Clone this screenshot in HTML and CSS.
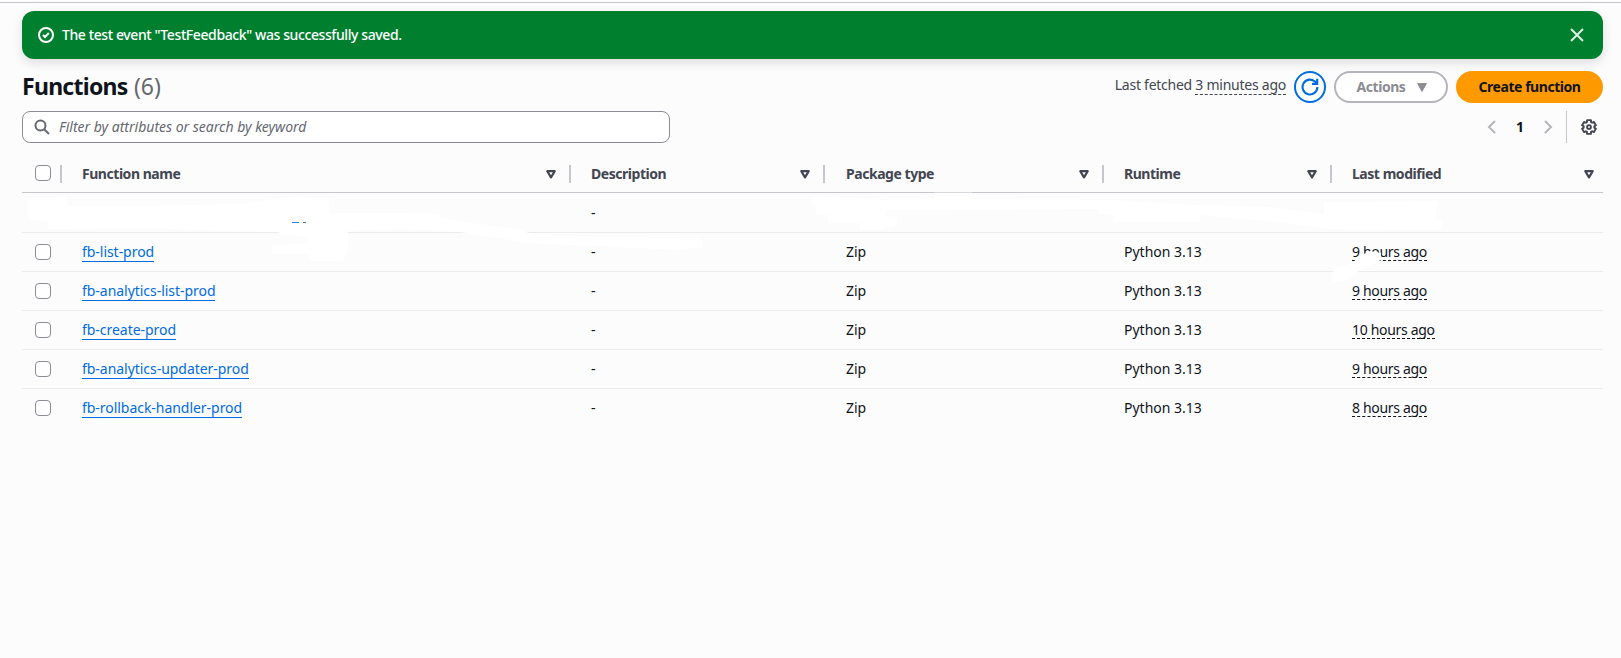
FILE: index.html
```html
<!DOCTYPE html>
<html lang="en">
<head>
<meta charset="utf-8">
<title>Functions</title>
<link rel="stylesheet" href="styles.css">
</head>
<body>
<main class="page">
  <div class="flash">
    <svg class="flash-icon" width="16" height="16" viewBox="0 0 16 16" fill="none" stroke="#fff" stroke-width="2"><circle cx="8" cy="8" r="7"/><path d="M5 8l2 2 3.8-4"/></svg>
    <span class="flash-text">The test event "TestFeedback" was successfully saved.</span>
    <svg class="flash-close" width="16" height="16" viewBox="0 0 16 16" fill="none" stroke="#dfeee3" stroke-width="2"><path d="M2 2l12 12M14 2L2 14"/></svg>
  </div>

  <header class="header">
    <h1 class="title">Functions <span class="count">(6)</span></h1>
    <div class="actions">
      <span class="fetched">Last fetched <span class="fetched-time">3 minutes ago</span></span>
      <button class="btn btn-refresh" aria-label="Refresh"><svg width="18" height="18" viewBox="0 0 16 16" fill="none" stroke="#006ce0" stroke-width="1.9"><path d="M14.6 8A6.6 6.6 0 1 1 12.7 3.4L14.4 5"/><path d="M14.4 .6v4.6H9.8"/></svg></button>
      <button class="btn btn-disabled">Actions <svg width="10" height="9" viewBox="0 0 10 9"><path d="M.6.6h8.8L5 8.4z" fill="#8c8c94" stroke="#8c8c94" stroke-linejoin="round"/></svg></button>
      <button class="btn btn-primary">Create function</button>
    </div>
  </header>

  <div class="tools">
    <div class="search">
      <svg width="16" height="16" viewBox="0 0 16 16" fill="none" stroke="#656871" stroke-width="2"><circle cx="6.5" cy="6.5" r="5"/><path d="M10.2 10.2L15 15"/></svg>
      <span class="placeholder">Filter by attributes or search by keyword</span>
    </div>
    <div class="pager">
      <svg width="16" height="16" viewBox="0 0 16 16" fill="none" stroke="#b4b4bb" stroke-width="2"><path d="M11 2L5 8l6 6"/></svg>
      <span class="page-number">1</span>
      <svg width="16" height="16" viewBox="0 0 16 16" fill="none" stroke="#b4b4bb" stroke-width="2"><path d="M5 2l6 6-6 6"/></svg>
      <span class="settings"><svg width="16" height="16" viewBox="0 0 16 16" fill="none" stroke="#424650" stroke-width="1.9" stroke-linejoin="round"><path d="M6.07 1.1H9.93L10.1 3.1L11.1 3.75L12.9 2.9L14.9 6.3L13.3 7.4V8.6L14.9 9.7L12.9 13.1L11.1 12.25L10.1 12.9L9.93 14.9H6.07L5.9 12.9L4.9 12.25L3.1 13.1L1.1 9.7L2.7 8.6V7.4L1.1 6.3L3.1 2.9L4.9 3.75L5.9 3.1Z"/><circle cx="8" cy="8" r="1.9"/></svg></span>
    </div>
  </div>

  <section class="table">
    <div class="row row-head">
      <div class="cell check"><span class="box"></span></div>
      <div class="cell">Function name<svg class="sort" width="10" height="9" viewBox="0 0 10 9"><path d="M1.3 1.2h7.4L5 7.4z"/></svg></div>
      <div class="cell">Description<svg class="sort" width="10" height="9" viewBox="0 0 10 9"><path d="M1.3 1.2h7.4L5 7.4z"/></svg></div>
      <div class="cell">Package type<svg class="sort" width="10" height="9" viewBox="0 0 10 9"><path d="M1.3 1.2h7.4L5 7.4z"/></svg></div>
      <div class="cell">Runtime<svg class="sort" width="10" height="9" viewBox="0 0 10 9"><path d="M1.3 1.2h7.4L5 7.4z"/></svg></div>
      <div class="cell">Last modified<svg class="sort" width="10" height="9" viewBox="0 0 10 9"><path d="M1.3 1.2h7.4L5 7.4z"/></svg></div>
    </div>
    <div class="row row-blank">
      <div class="cell"></div><div class="cell"></div><div class="cell">-</div><div class="cell"></div><div class="cell"></div><div class="cell"></div>
    </div>
    <div class="row">
      <div class="cell check"><span class="box"></span></div><div class="cell"><a class="link">fb-list-prod</a></div><div class="cell">-</div><div class="cell">Zip</div><div class="cell">Python 3.13</div><div class="cell"><span class="ago">9 hours ago</span></div>
    </div>
    <div class="row">
      <div class="cell check"><span class="box"></span></div><div class="cell"><a class="link">fb-analytics-list-prod</a></div><div class="cell">-</div><div class="cell">Zip</div><div class="cell">Python 3.13</div><div class="cell"><span class="ago">9 hours ago</span></div>
    </div>
    <div class="row">
      <div class="cell check"><span class="box"></span></div><div class="cell"><a class="link">fb-create-prod</a></div><div class="cell">-</div><div class="cell">Zip</div><div class="cell">Python 3.13</div><div class="cell"><span class="ago">10 hours ago</span></div>
    </div>
    <div class="row">
      <div class="cell check"><span class="box"></span></div><div class="cell"><a class="link">fb-analytics-updater-prod</a></div><div class="cell">-</div><div class="cell">Zip</div><div class="cell">Python 3.13</div><div class="cell"><span class="ago">9 hours ago</span></div>
    </div>
    <div class="row">
      <div class="cell check"><span class="box"></span></div><div class="cell"><a class="link">fb-rollback-handler-prod</a></div><div class="cell">-</div><div class="cell">Zip</div><div class="cell">Python 3.13</div><div class="cell"><span class="ago">8 hours ago</span></div>
    </div>
  </section>
</main>

<!-- white brush strokes over the first rows -->
<svg class="strokes" width="1621" height="658" viewBox="0 0 1621 658" fill="#fff">
  <path d="M29 199L67 197V206L150 206L240 204L290 197L329 198V213L400 213L440 214V218L520 230L535 235L600 237L702 238V247L680 250L530 243L460 232L400 229L348 231V252L343 261H310V254H272V246L308 243V236L284 235L278 232L222 231L150 228L48 229V221L29 220Z"/>
  <path d="M812 196L880 200L934 199V193H972V199L1110 200L1190 205L1270 207L1324 214V202L1437 201L1435 220L1442 221V230L1400 230L1330 229L1280 222L1200 215V222H1114V215L1098 214V209L886 210V216L897 217V225L880 230H860V223H828V215H816V205L812 204Z"/>
  <path d="M934 192h38v1h-38z" opacity=".3"/>
  <path d="M1333 269L1350 264L1364 254L1370 251L1381 253V260L1360 270L1345 281L1333 282Z"/>
  <path d="M292 222.5h7M303 222.5h3" stroke="#2b80dc"/>
</svg>
</body>
</html>
```
FILE: styles.css
```css
* { box-sizing: border-box; }
body {
  margin: 0;
  height: 658px;
  overflow: hidden;
  background: #fcfcfd;
  color: #0f141a;
  font: 14px/20px "Noto Sans", "Open Sans", sans-serif;
}
svg { display: block; flex: none; }
.page {
  margin-top: 2px;
  padding: 8px 18px 0 22px;
  border-top: 1px solid #c6c6cd;
}
.flash {
  display: flex;
  align-items: center;
  height: 48px;
  padding: 0 18px 0 16px;
  border-radius: 12px;
  background: #00802f;
  color: #fff;
  box-shadow: 0 4px 10px 1px rgba(0, 7, 22, .10);
}
.flash-text { flex: 1; margin-left: 8px; font-weight: 500; letter-spacing: -.4px; }
.header {
  display: flex;
  justify-content: space-between;
  align-items: center;
  height: 32px;
  margin-top: 12px;
}
.title { margin: -2px 0 0; font-size: 23px; line-height: 32px; font-weight: 700; letter-spacing: -.72px; }
.count { margin-left: 1px; font-weight: 400; color: #656871; letter-spacing: 0; }
.actions { display: flex; align-items: center; gap: 8px; }
.fetched { margin-top: -4px; color: #424650; letter-spacing: -.25px; }
.fetched-time { display: inline-block; line-height: 18px; border-bottom: 1px dashed #424650; }
.btn {
  display: flex;
  align-items: center;
  justify-content: center;
  height: 32px;
  padding: 0;
  border: 2px solid;
  border-radius: 16px;
  background: #fff;
  font: 700 14px/20px "Noto Sans", "Open Sans", sans-serif;
  letter-spacing: -.46px;
}
.btn-refresh { width: 32px; border-color: #006ce0; }
.btn-disabled { width: 114px; padding-left: 2px; gap: 12px; border-color: #b4b4bb; color: #8c8c94; }
.btn-primary { width: 147px; border-color: #ff9900; background: #ff9900; color: #0f141a; }
.tools {
  display: flex;
  justify-content: space-between;
  height: 32px;
  margin-top: 8px;
}
.search {
  display: flex;
  align-items: center;
  gap: 9px;
  width: 648px;
  padding-left: 11px;
  border: 1px solid #8c8c94;
  border-radius: 8px;
  background: #fff;
}
.placeholder { color: #656871; font-style: italic; }
.pager { display: flex; align-items: center; }
.page-number { width: 40px; text-align: center; font-weight: 700; }
.settings {
  display: flex;
  align-items: center;
  height: 32px;
  margin-left: 10px;
  padding: 0 6px 0 14px;
  border-left: 1px solid #c6c6cd;
}
.row {
  display: grid;
  grid-template-columns: 40px 509px 254px 279px 228px 1fr;
  height: 39px;
  border-bottom: 1px solid #ebebf0;
}
.row:last-child { height: 38px; border-bottom: 0; }
.row-head {
  height: 50px;
  padding-top: 13px;
  border-bottom-color: #c6c6cd;
  color: #424650;
  font-weight: 700;
  letter-spacing: -.46px;
}
.row-blank { height: 40px; }
.cell { display: flex; align-items: center; padding-left: 20px; }
.cell:nth-child(4) { padding-left: 21px; }
.row-head .cell {
  height: 18px;
  margin-top: 9px;
  padding-right: 13px;
  border-right: 2px solid #c6c6cd;
}
.row .check { padding-left: 13px; padding-right: 0; }
.row-head .cell:last-child { padding-right: 9px; border-right: 0; }
.row-head .box { margin-top: -2px; }
.box { flex: none; width: 16px; height: 16px; border: 1px solid #8c8c94; border-radius: 4px; background: #fff; }
.sort { margin-left: auto; fill: none; stroke: #424650; stroke-width: 2.2; stroke-linejoin: round; }
.link { margin-top: 1px; line-height: 18px; color: #006ce0; border-bottom: 1px solid #006ce0; letter-spacing: -.04px; }
.ago { margin-top: -1px; line-height: 17px; border-bottom: 1px dashed #0f141a; letter-spacing: -.32px; }
.strokes { position: absolute; top: 0; left: 0; pointer-events: none; }
```
